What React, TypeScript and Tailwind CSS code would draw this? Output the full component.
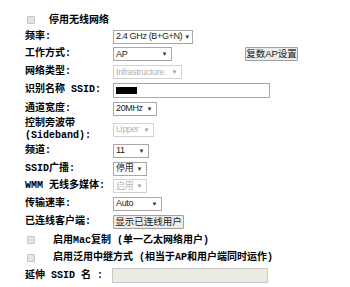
import React from 'react';

// label font: bold CJK with monospace latin, like the old router pages
const labelFont = "font-['Liberation_Mono','Noto_Sans_CJK_SC',monospace] font-bold text-[10px] text-black whitespace-nowrap";
const ctrlFont = "font-['Liberation_Sans','Noto_Sans_CJK_SC',sans-serif] whitespace-nowrap";

function Select({ value, w, disabled }: { value: string; w: string; disabled?: boolean }) {
    return (
        <div
            className={`${ctrlFont} ${w} shrink-0 h-[14px] flex items-center justify-between bg-white border pl-[2px] pr-[4px] text-[9px] tracking-[-0.35px] leading-none ${
                disabled ? 'border-[#d2d2d2] text-[#b4b4b4]' : 'border-[#a8a8a8] text-[#222]'
            }`}
        >
            <span>{value}</span>
            <span className={`text-[6px] ml-[2px] ${disabled ? 'text-[#9a9a9a]' : 'text-[#333]'}`}>▼</span>
        </div>
    );
}

function Check({ label, gap }: { label: string; gap: string }) {
    return (
        <div className="flex items-center h-full">
            <span className="ml-[2px] w-[8px] h-[8px] shrink-0 border border-[#c4c4c4] bg-[#e4e4e4] rounded-[1px]" />
            <span className={`${labelFont} ${gap}`}>{label}</span>
        </div>
    );
}

function Row({ label, h, children }: { label: React.ReactNode; h: string; children?: React.ReactNode }) {
    return (
        <div className={`flex items-center ${h}`}>
            <div className={`${labelFont} w-[88px] shrink-0 leading-[12px]`}>{label}</div>
            <div className="flex items-center">{children}</div>
        </div>
    );
}

export default function App() {
    return (
        <div className="w-[350px] h-[287px] bg-white pt-[12px] pl-[25px] overflow-hidden">
            <div className="h-[16px]">
                <Check label="停用无线网络" gap="ml-[14px]" />
            </div>

            <Row label="频率:" h="h-[17px]">
                <Select value="2.4 GHz (B+G+N)" w="w-[80px]" />
            </Row>

            <Row label="工作方式:" h="h-[18px]">
                <Select value="AP" w="w-[59px]" />
                <button
                    className={`${ctrlFont} ml-[73px] w-[53px] h-[14px] border border-[#a0a0a0] bg-[#ececec] text-[9.5px] leading-none text-[#222] rounded-[1px]`}
                >
                    复数AP设置
                </button>
            </Row>

            <Row label="网络类型:" h="h-[18px]">
                <Select value="Infrastructure" w="w-[69px]" disabled />
            </Row>

            <Row label="识别名称 SSID:" h="h-[18px]">
                <div className="w-[157px] h-[15px] border border-[#a8a8a8] bg-white flex items-center pl-[2px]">
                    <span className="w-[21px] h-[7px] bg-black" />
                </div>
            </Row>

            <Row label="通道宽度:" h="h-[19px]">
                <Select value="20MHz" w="w-[44px]" />
            </Row>

            <Row
                label={
                    <>
                        控制旁波带
                        <br />
                        (Sideband):
                    </>
                }
                h="h-[23px]"
            >
                <Select value="Upper" w="w-[41px]" disabled />
            </Row>

            <Row label="频道:" h="h-[19px]">
                <Select value="11" w="w-[36px]" />
            </Row>

            <Row label="SSID广播:" h="h-[17px]">
                <Select value="停用" w="w-[34px]" />
            </Row>

            <Row label="WMM 无线多媒体:" h="h-[18px]">
                <Select value="启用" w="w-[34px]" disabled />
            </Row>

            <Row label="传输速率:" h="h-[17px]">
                <Select value="Auto" w="w-[49px]" />
            </Row>

            <Row label="已连线客户端:" h="h-[19px]">
                <button
                    className={`${ctrlFont} w-[71px] h-[14px] border border-[#a0a0a0] bg-[#ececec] text-[9.5px] leading-none text-[#222] rounded-[1px]`}
                >
                    显示已连线用户
                </button>
            </Row>

            <div className="h-[18px]">
                <Check label="启用Mac复制 (单一乙太网络用户)" gap="ml-[18px]" />
            </div>
            <div className="h-[17px]">
                <Check label="启用泛用中继方式 (相当于AP和用户端同时运作)" gap="ml-[18px]" />
            </div>

            <div className="flex items-center h-[18px]">
                <div className={`${labelFont} w-[87px] shrink-0`}>延伸 SSID 名 :</div>
                <div className="w-[156px] h-[15px] border border-[#c8c8c8] bg-[#ebeae3]" />
            </div>
        </div>
    );
}
